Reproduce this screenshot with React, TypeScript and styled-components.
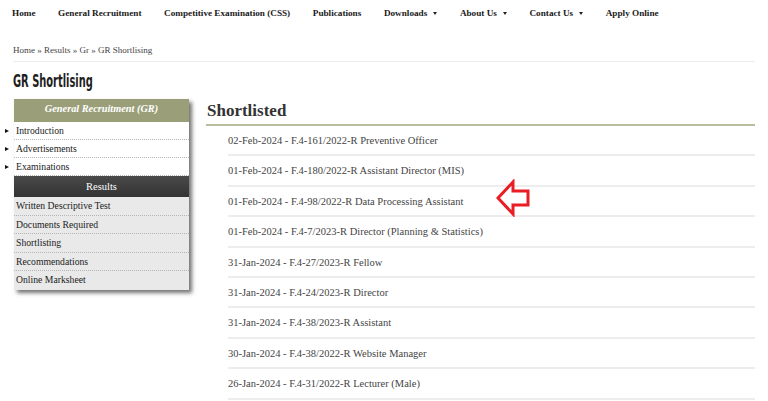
import React from "react";
import styled, { createGlobalStyle } from "styled-components";

const Global = createGlobalStyle`
  html, body { margin: 0; padding: 0; background: #fff; }
  body { font-family: "Liberation Serif", "Times New Roman", serif; color: #333; }
`;

const Page = styled.div`
  width: 768px;
  position: relative;
`;

const Nav = styled.nav`
  height: 26px;
  display: flex;
  align-items: center;
  gap: 22.6px;
  padding-left: 12px;
`;

const NavItem = styled.span`
  font-weight: bold;
  font-size: 9.2px;
  color: #1a1a1a;
  display: flex;
  align-items: center;
  gap: 6px;
  white-space: nowrap;
`;

const Caret = styled.span`
  width: 0;
  height: 0;
  border-left: 2.5px solid transparent;
  border-right: 2.5px solid transparent;
  border-top: 3px solid #222;
`;

const Container = styled.div`
  margin: 0 13px;
  width: 742px;
`;

const Breadcrumb = styled.div`
  padding-top: 18px;
  padding-bottom: 5px;
  line-height: 12px;
  font-size: 9px;
  color: #444;
  border-bottom: 1px solid #ececec;
`;

const Title = styled.h1`
  margin: 9px 0 0;
  line-height: 20px;
  font-family: "Liberation Sans Narrow", "DejaVu Sans Condensed", sans-serif;
  font-weight: bold;
  font-size: 18px;
  color: #1e1e1e;
  transform: scaleX(0.61);
  transform-origin: left center;
  white-space: nowrap;
`;

const Columns = styled.div`
  display: flex;
  gap: 17px;
  margin-top: 8px;
  align-items: flex-start;
`;

const Sidebar = styled.div`
  width: 175px;
  margin-left: 1px;
  box-shadow: 3px 3px 4px rgba(0, 0, 0, 0.55);
  background: #fff;
`;

const SideHead = styled.div<{ $dark?: boolean }>`
  height: ${(p) => (p.$dark ? "21px" : "23px")};
  line-height: ${(p) => (p.$dark ? "21px" : "19px")};
  text-align: center;
  color: #fff;
  font-size: ${(p) => (p.$dark ? "10.5px" : "10.3px")};
  font-weight: ${(p) => (p.$dark ? "normal" : "bold")};
  font-style: ${(p) => (p.$dark ? "normal" : "italic")};
  background: ${(p) =>
    p.$dark ? "linear-gradient(#4a4a4a, #333)" : "#9b9f79"};
`;

const SideItem = styled.div<{ $gray?: boolean; $bullet?: boolean }>`
  position: relative;
  height: ${(p) => (p.$gray ? "18.5px" : "18px")};
  line-height: ${(p) => (p.$gray ? "18.5px" : "18px")};
  padding-left: 2px;
  font-size: 9.7px;
  color: #222;
  background: ${(p) => (p.$gray ? "#e9e9e9" : "#fff")};
  border-bottom: 1px dotted #b5b5b5;
  box-sizing: border-box;
  &::before {
    content: "";
    display: ${(p) => (p.$bullet ? "block" : "none")};
    position: absolute;
    left: -9px;
    top: 7px;
    border-top: 2.5px solid transparent;
    border-bottom: 2.5px solid transparent;
    border-left: 4px solid #111;
  }
  &:last-child {
    border-bottom: none;
  }
`;

const Main = styled.div`
  flex: 1;
  position: relative;
`;

const Heading = styled.h2`
  margin: 2px 0 0;
  line-height: 20px;
  padding-bottom: 3px;
  font-size: 17px;
  font-weight: bold;
  color: #333;
  border-bottom: 2px solid #b9bc9d;
  padding-left: 1px;
`;

const List = styled.ul`
  list-style: none;
  margin: 0 0 0 22px;
  padding: 0;
`;

const Row = styled.li`
  padding-top: 8px;
  padding-bottom: 7.4px;
  line-height: 13px;
  font-size: 10.5px;
  color: #444;
  border-bottom: 2px solid #ededed;
`;

const Arrow = styled.svg`
  position: absolute;
  left: 290px;
  top: 80px;
`;

const navItems: [string, boolean][] = [
  ["Home", false],
  ["General Recruitment", false],
  ["Competitive Examination (CSS)", false],
  ["Publications", false],
  ["Downloads", true],
  ["About Us", true],
  ["Contact Us", true],
  ["Apply Online", false],
];

const rows = [
  "02-Feb-2024 - F.4-161/2022-R Preventive Officer",
  "01-Feb-2024 - F.4-180/2022-R Assistant Director (MIS)",
  "01-Feb-2024 - F.4-98/2022-R Data Processing Assistant",
  "01-Feb-2024 - F.4-7/2023-R Director (Planning & Statistics)",
  "31-Jan-2024 - F.4-27/2023-R Fellow",
  "31-Jan-2024 - F.4-24/2023-R Director",
  "31-Jan-2024 - F.4-38/2023-R Assistant",
  "30-Jan-2024 - F.4-38/2022-R Website Manager",
  "26-Jan-2024 - F.4-31/2022-R Lecturer (Male)",
];

export default function App() {
  return (
    <Page>
      <Global />
      <Nav>
        {navItems.map(([label, caret]) => (
          <NavItem key={label}>
            {label}
            {caret && <Caret />}
          </NavItem>
        ))}
      </Nav>
      <Container>
        <Breadcrumb>Home » Results » Gr » GR Shortlising</Breadcrumb>
        <Title>GR Shortlising</Title>
        <Columns>
          <Sidebar>
            <SideHead>General Recruitment (GR)</SideHead>
            <SideItem $bullet>Introduction</SideItem>
            <SideItem $bullet>Advertisements</SideItem>
            <SideItem $bullet>Examinations</SideItem>
            <SideHead $dark>Results</SideHead>
            <SideItem $gray>Written Descriptive Test</SideItem>
            <SideItem $gray>Documents Required</SideItem>
            <SideItem $gray>Shortlisting</SideItem>
            <SideItem $gray>Recommendations</SideItem>
            <SideItem $gray>Online Marksheet</SideItem>
          </Sidebar>
          <Main>
            <Heading>Shortlisted</Heading>
            <List>
              {rows.map((r) => (
                <Row key={r}>{r}</Row>
              ))}
            </List>
            <Arrow width="34" height="38" viewBox="0 0 34 38">
              <polygon
                points="2,19 17,3 17,12 32,12 32,26 17,26 17,35"
                fill="#fff"
                stroke="#ea1c24"
                strokeWidth="3"
                strokeLinejoin="miter"
              />
            </Arrow>
          </Main>
        </Columns>
      </Container>
    </Page>
  );
}
